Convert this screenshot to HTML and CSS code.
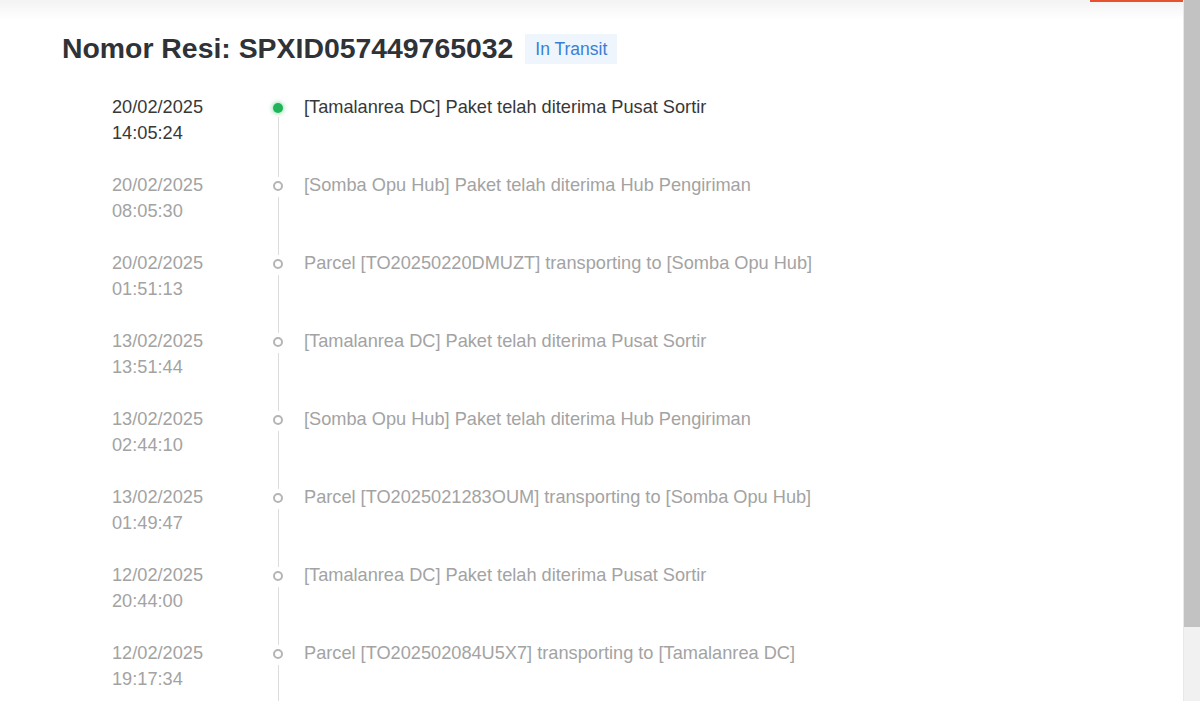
FILE: index.html
```html
<!DOCTYPE html>
<html lang="en">
<head>
    <meta charset="UTF-8">
    <meta name="viewport" content="width=device-width, initial-scale=1.0">
    <title>Lacak Paket</title>
    <link rel="stylesheet" href="styles.css">
</head>
<body>
    <div class="top-bar"><span class="top-accent"></span></div>
    <div class="page">
        <div class="tracking">
            <div class="resi-header">
                <h1 class="resi-title">Nomor Resi: SPXID057449765032</h1>
                <span class="status-tag">In Transit</span>
            </div>
            <ul class="timeline">
                <li class="event current">
                    <div class="event-time">20/02/2025<br>14:05:24</div>
                    <div class="event-axis"><span class="dot"></span><span class="line"></span></div>
                    <div class="event-desc">[Tamalanrea DC] Paket telah diterima Pusat Sortir</div>
                </li>
                <li class="event">
                    <div class="event-time">20/02/2025<br>08:05:30</div>
                    <div class="event-axis"><span class="dot"></span><span class="line"></span></div>
                    <div class="event-desc">[Somba Opu Hub] Paket telah diterima Hub Pengiriman</div>
                </li>
                <li class="event">
                    <div class="event-time">20/02/2025<br>01:51:13</div>
                    <div class="event-axis"><span class="dot"></span><span class="line"></span></div>
                    <div class="event-desc">Parcel [TO20250220DMUZT] transporting to [Somba Opu Hub]</div>
                </li>
                <li class="event">
                    <div class="event-time">13/02/2025<br>13:51:44</div>
                    <div class="event-axis"><span class="dot"></span><span class="line"></span></div>
                    <div class="event-desc">[Tamalanrea DC] Paket telah diterima Pusat Sortir</div>
                </li>
                <li class="event">
                    <div class="event-time">13/02/2025<br>02:44:10</div>
                    <div class="event-axis"><span class="dot"></span><span class="line"></span></div>
                    <div class="event-desc">[Somba Opu Hub] Paket telah diterima Hub Pengiriman</div>
                </li>
                <li class="event">
                    <div class="event-time">13/02/2025<br>01:49:47</div>
                    <div class="event-axis"><span class="dot"></span><span class="line"></span></div>
                    <div class="event-desc">Parcel [TO2025021283OUM] transporting to [Somba Opu Hub]</div>
                </li>
                <li class="event">
                    <div class="event-time">12/02/2025<br>20:44:00</div>
                    <div class="event-axis"><span class="dot"></span><span class="line"></span></div>
                    <div class="event-desc">[Tamalanrea DC] Paket telah diterima Pusat Sortir</div>
                </li>
                <li class="event">
                    <div class="event-time">12/02/2025<br>19:17:34</div>
                    <div class="event-axis"><span class="dot"></span><span class="line"></span></div>
                    <div class="event-desc">Parcel [TO202502084U5X7] transporting to [Tamalanrea DC]</div>
                </li>
            </ul>
        </div>
        <div class="scrollbar"><div class="scroll-thumb"></div></div>
    </div>
</body>
</html>
```

FILE: styles.css
```css
html, body {
    margin: 0;
    height: 100%;
    overflow: hidden;
}

body {
    font-family: "Liberation Sans", Arial, sans-serif;
    background: #fff;
    color: #333;
    display: flex;
    flex-direction: column;
}

.top-bar {
    height: 20px;
    flex-shrink: 0;
    background: linear-gradient(#f3f3f3, #fff);
    display: flex;
    justify-content: flex-end;
    padding-right: 17px;
}

.top-accent {
    width: 93px;
    height: 2px;
    background: #e8512e;
}

.page {
    flex: 1;
    display: flex;
    min-height: 0;
}

.tracking {
    flex: 1;
    padding: 10px 0 0 62px;
}

.resi-header {
    display: flex;
    align-items: center;
    gap: 12px;
    height: 36px;
}

.resi-title {
    margin: 0;
    font-size: 28.4px;
    font-weight: bold;
    color: #2f3237;
    line-height: 36px;
}

.status-tag {
    background: #eef5fd;
    color: #3a7fd5;
    font-size: 17.5px;
    height: 30px;
    line-height: 30px;
    padding: 0 10px;
    margin-top: 1px;
}

.timeline {
    list-style: none;
    margin: 28px 0 0 50px;
    padding: 0;
}

.event {
    display: flex;
    height: 78px;
    font-size: 18.2px;
    line-height: 26px;
    color: #a3a3a3;
}

.event.current {
    color: #383838;
}

.event-time {
    width: 146px;
}

.event-axis {
    width: 40px;
    display: flex;
    flex-direction: column;
    align-items: center;
    padding-top: 9px;
    box-sizing: border-box;
}

.dot {
    width: 6px;
    height: 6px;
    border: 2px solid #b5b5b5;
    border-radius: 50%;
    flex-shrink: 0;
}

.current .dot {
    width: 10px;
    height: 10px;
    border: none;
    background: #1fb457;
    box-shadow: 0 0 4px 1px rgba(31, 180, 87, 0.45);
}

.line {
    flex: 1;
    width: 1px;
    background: #dcdcdc;
    margin: 6px 0 -5px;
}

.current .line {
    margin-top: 4px;
}

.event-desc {
    padding-left: 6px;
}

.scrollbar {
    width: 16px;
    margin-top: -20px;
    background: #f1f1f1;
    border-left: 1px solid #e8e8e8;
}

.scroll-thumb {
    height: 627px;
    background: #c2c2c2;
}
```
